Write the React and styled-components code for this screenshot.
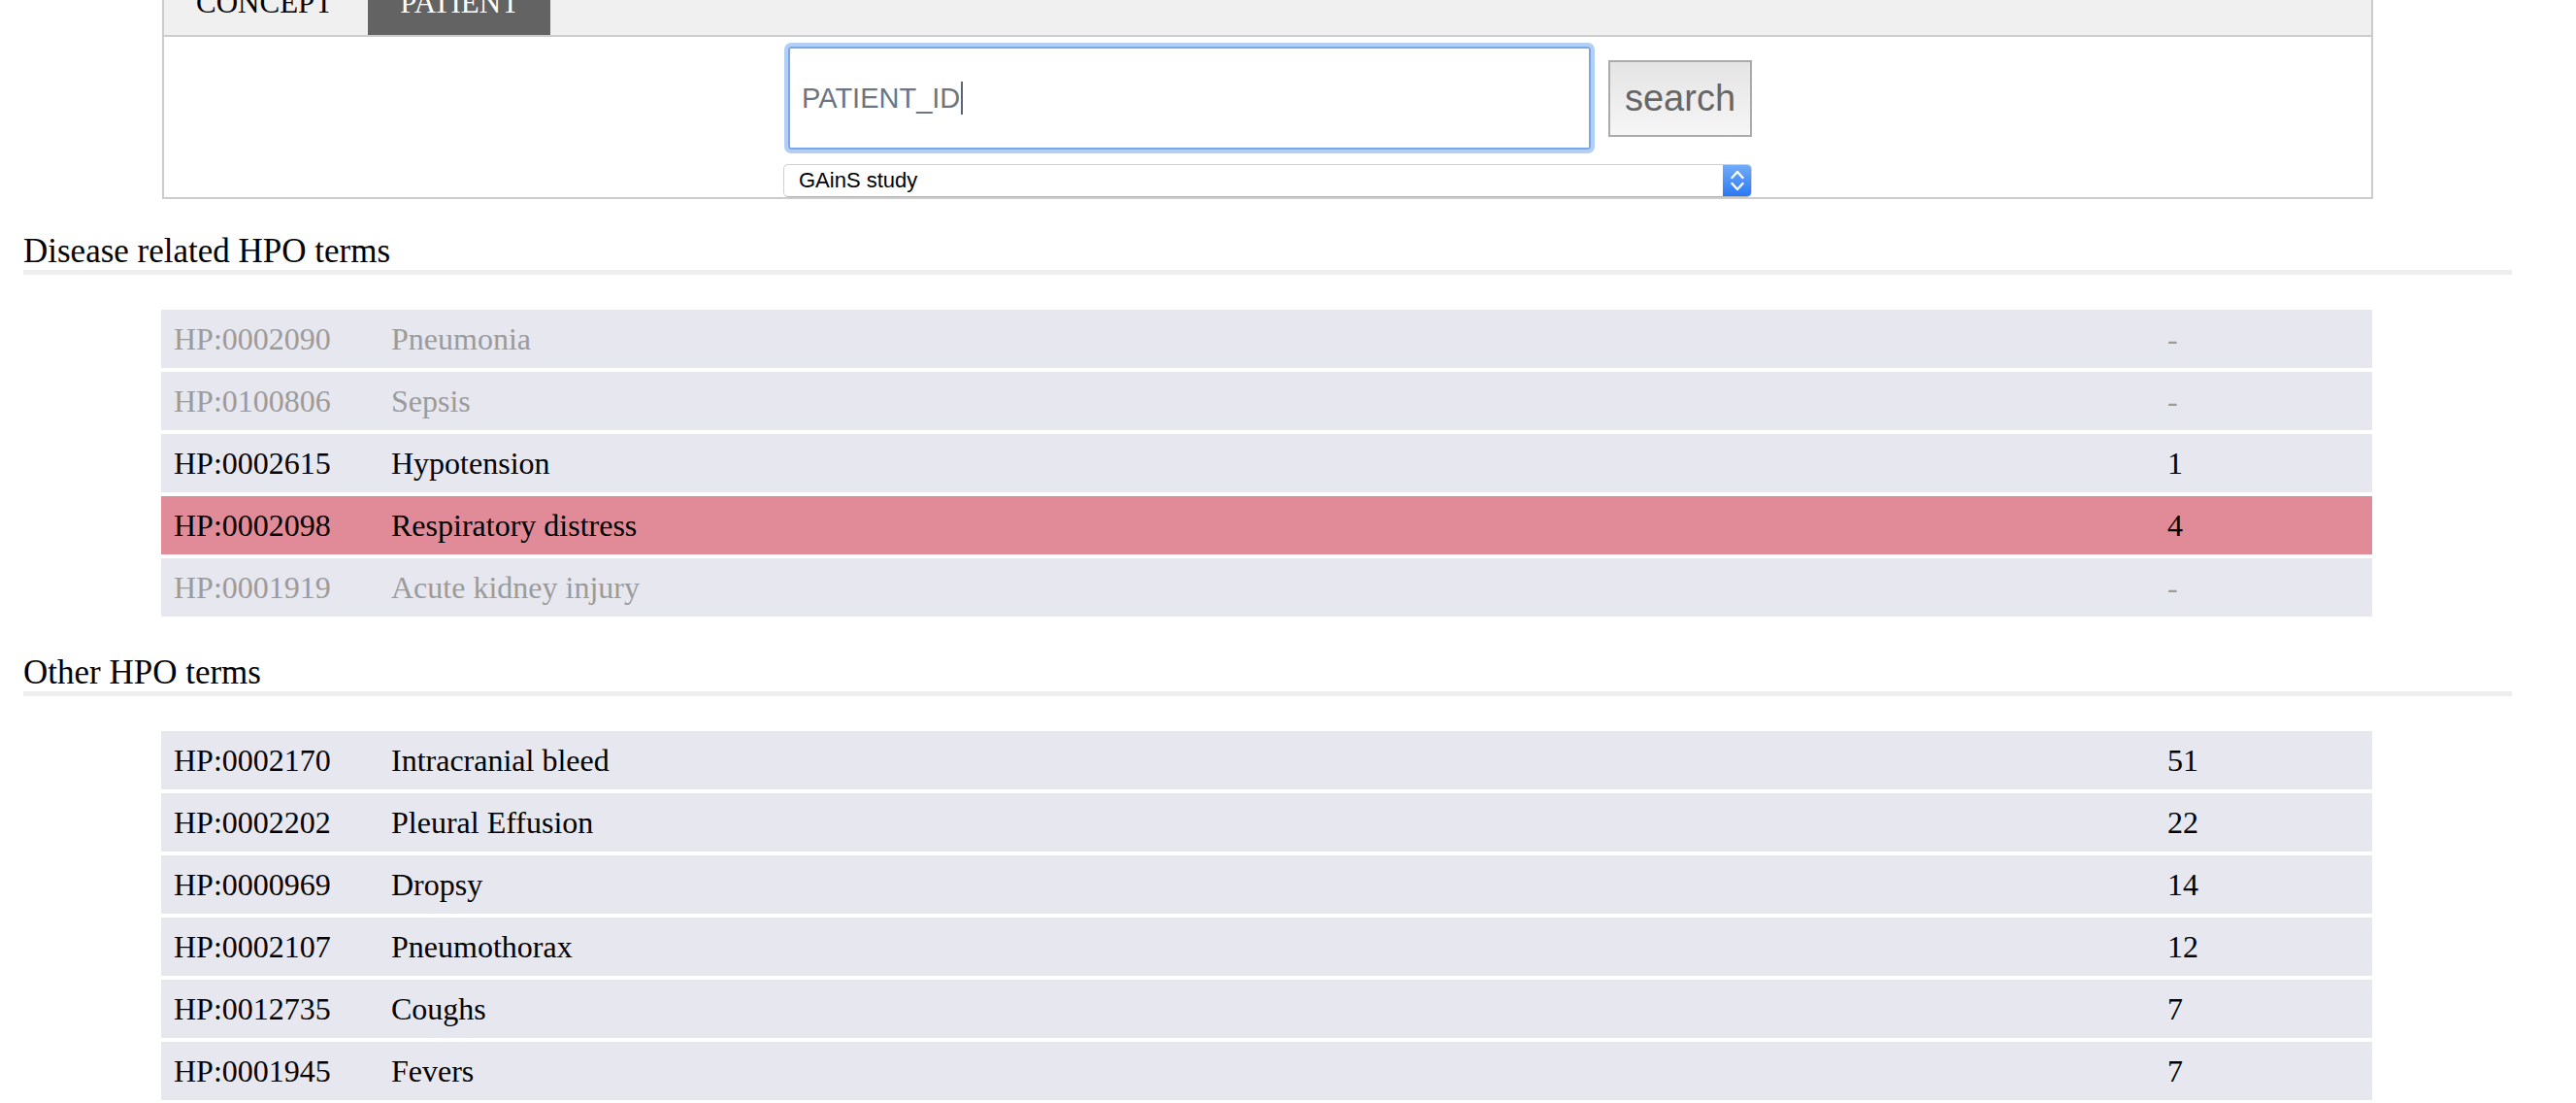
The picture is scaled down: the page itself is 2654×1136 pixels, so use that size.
import React from "react";
import styled, { createGlobalStyle } from "styled-components";

const GlobalStyle = createGlobalStyle`
  html, body {
    margin: 0;
    padding: 0;
    overflow: hidden;
    background: #ffffff;
  }
`;

const Page = styled.div`
  width: 2564px;
  margin: -30px 0 0 24px;
  font-family: "Liberation Serif", "Times New Roman", serif;
  color: #000;
`;

/* search panel with the tabs */
const Panel = styled.div`
  width: 2278px;
  margin: 0 auto;
  box-sizing: border-box;
  border: 2px solid #cccccc;
  border-top: none;
`;

const TabBar = styled.div`
  display: flex;
  gap: 4px;
  height: 66px;
  background: #f0f0f0;
  border-bottom: 2px solid #cccccc;
`;

const Tab = styled.div`
  padding: 0 32px 0 33px;
  font-size: 31px;
  line-height: 66px;
  text-transform: uppercase;
  color: ${(p) => (p.$active ? "#ffffff" : "#000000")};
  background: ${(p) => (p.$active ? "#636363" : "transparent")};
`;

const SearchArea = styled.div`
  display: flex;
  flex-direction: column;
  align-items: center;
  padding-top: 10px;
`;

const SearchRow = styled.div`
  width: 998px;
  box-sizing: border-box;
  padding-left: 5px;
  display: flex;
  align-items: center;
  gap: 18px;
`;

const Field = styled.div`
  flex: 1;
  height: 106px;
  box-sizing: border-box;
  display: flex;
  align-items: center;
  padding-left: 12px;
  border: 2px solid #7aa6ea;
  border-radius: 3px;
  box-shadow: 0 0 0 4px #b4cff6;
  font-family: "Liberation Sans", Arial, sans-serif;
  font-size: 29px;
  color: #6b7583;
`;

const Caret = styled.span`
  display: inline-block;
  width: 2px;
  height: 34px;
  margin-left: 1px;
  background: #5c6470;
`;

const SearchButton = styled.button`
  width: 148px;
  height: 79px;
  box-sizing: border-box;
  border: 2px solid #ababab;
  border-radius: 0;
  background: linear-gradient(#e4e4e4, #f6f6f6);
  font-family: "Liberation Sans", Arial, sans-serif;
  font-size: 38px;
  color: #666666;
  padding: 0;
`;

const StudySelect = styled.div`
  width: 998px;
  height: 34px;
  margin-top: 15px;
  box-sizing: border-box;
  display: flex;
  border: 1px solid #d0d0d0;
  border-bottom-color: #b5b5b5;
  border-radius: 5px;
  overflow: hidden;
  background: #fff;
  font-family: "Liberation Sans", Arial, sans-serif;
  font-size: 22px;
  line-height: 32px;
`;

const SelectLabel = styled.span`
  flex: 1;
  padding-left: 15px;
`;

const Stepper = styled.div`
  width: 29px;
  display: flex;
  align-items: center;
  justify-content: center;
  background: linear-gradient(#72acf8, #2a79f4);
`;

/* term tables */
const Heading = styled.h3`
  margin: 34px 0 0;
  font-size: 35px;
  line-height: 39px;
  font-weight: normal;
`;

const Rule = styled.div`
  height: 5px;
  background: #eeeeee;
`;

const TermList = styled.div`
  width: 2278px;
  margin: 36px 0 0 142px;
  padding-bottom: 4px;
  display: flex;
  flex-direction: column;
  gap: 4px;
`;

const TermRow = styled.div`
  display: grid;
  grid-template-columns: 224px 1830px 1fr;
  height: 60px;
  padding-left: 13px;
  font-size: 32px;
  line-height: 60px;
  white-space: nowrap;
  background: ${(p) => (p.$alert ? "#e08b97" : "#e7e7ef")};
  color: ${(p) => (p.$muted ? "#9b9b9b" : "#000000")};
`;

const diseaseTerms = [
  { id: "HP:0002090", name: "Pneumonia", count: "-", muted: true },
  { id: "HP:0100806", name: "Sepsis", count: "-", muted: true },
  { id: "HP:0002615", name: "Hypotension", count: "1" },
  { id: "HP:0002098", name: "Respiratory distress", count: "4", alert: true },
  { id: "HP:0001919", name: "Acute kidney injury", count: "-", muted: true },
];

const otherTerms = [
  { id: "HP:0002170", name: "Intracranial bleed", count: "51" },
  { id: "HP:0002202", name: "Pleural Effusion", count: "22" },
  { id: "HP:0000969", name: "Dropsy", count: "14" },
  { id: "HP:0002107", name: "Pneumothorax", count: "12" },
  { id: "HP:0012735", name: "Coughs", count: "7" },
  { id: "HP:0001945", name: "Fevers", count: "7" },
];

const Terms = ({ title, terms }) => (
  <>
    <Heading>{title}</Heading>
    <Rule />
    <TermList>
      {terms.map((t) => (
        <TermRow key={t.id} $muted={t.muted} $alert={t.alert}>
          <span>{t.id}</span>
          <span>{t.name}</span>
          <span>{t.count}</span>
        </TermRow>
      ))}
    </TermList>
  </>
);

const App = () => {
  return (
    <Page>
      <GlobalStyle />
      <Panel>
        <TabBar>
          <Tab>Concept</Tab>
          <Tab $active>Patient</Tab>
        </TabBar>
        <SearchArea>
          <SearchRow>
            <Field>
              PATIENT_ID
              <Caret />
            </Field>
            <SearchButton>search</SearchButton>
          </SearchRow>
          <StudySelect>
            <SelectLabel>GAinS study</SelectLabel>
            <Stepper>
              <svg width="16" height="26" viewBox="0 0 16 26" fill="none">
                <polyline
                  points="2.5,10 8,4 13.5,10"
                  stroke="#fff"
                  strokeWidth="2.4"
                  strokeLinecap="round"
                  strokeLinejoin="round"
                />
                <polyline
                  points="2.5,16 8,22 13.5,16"
                  stroke="#fff"
                  strokeWidth="2.4"
                  strokeLinecap="round"
                  strokeLinejoin="round"
                />
              </svg>
            </Stepper>
          </StudySelect>
        </SearchArea>
      </Panel>
      <Terms title="Disease related HPO terms" terms={diseaseTerms} />
      <Terms title="Other HPO terms" terms={otherTerms} />
    </Page>
  );
};

export default App;
